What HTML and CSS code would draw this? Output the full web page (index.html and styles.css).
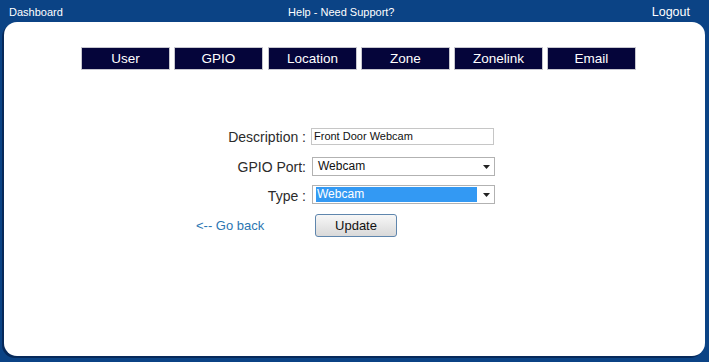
FILE: index.html
```html
<!DOCTYPE html>
<html>
<head>
<meta charset="utf-8">
<link rel="stylesheet" href="styles.css">
</head>
<body>
<header class="topbar">
  <a class="top-link" href="#">Dashboard</a>
  <a class="top-link help" href="#">Help - Need Support?</a>
  <a class="top-link logout" href="#">Logout</a>
</header>
<main class="panel">
  <nav class="tabs">
    <a class="tab" href="#">User</a>
    <a class="tab" href="#">GPIO</a>
    <a class="tab" href="#">Location</a>
    <a class="tab" href="#">Zone</a>
    <a class="tab" href="#">Zonelink</a>
    <a class="tab" href="#">Email</a>
  </nav>
  <form class="form">
    <label class="label">Description :</label>
    <div class="input">Front Door Webcam</div>
    <label class="label">GPIO Port:</label>
    <div class="select"><span class="select-value">Webcam</span><svg class="arrow" width="7" height="4" viewBox="0 0 7 4"><path d="M0 0h7L3.5 4z" fill="#222"/></svg></div>
    <label class="label">Type :</label>
    <div class="select focused"><span class="select-value">Webcam</span><svg class="arrow" width="7" height="4" viewBox="0 0 7 4"><path d="M0 0h7L3.5 4z" fill="#222"/></svg></div>
    <a class="back" href="#">&lt;-- Go back</a>
    <div><button class="update" type="button">Update</button></div>
  </form>
</main>
</body>
</html>
```
FILE: styles.css
```css
html, body {
  margin: 0;
  padding: 0;
}
body {
  background: #0b4385;
  font-family: "Liberation Sans", Arial, sans-serif;
  width: 709px;
  height: 362px;
  overflow: hidden;
}
.topbar {
  height: 22px;
  display: flex;
  justify-content: space-between;
  align-items: center;
  padding: 0 19px 0 9px;
}
.top-link {
  color: #fff;
  text-decoration: none;
  font-size: 11px;
  line-height: 22px;
  padding-top: 2px;
}
.top-link.help {
  margin-right: 32px;
}
.top-link.logout {
  font-size: 12.5px;
}
.panel {
  margin: 0 4px 0 4px;
  height: 334px;
  background: #fff;
  border-radius: 13px;
  box-shadow: -2px 2px 0 #06295a;
  padding-top: 25px;
  box-sizing: border-box;
}
.tabs {
  display: flex;
  gap: 4px;
  padding-left: 77px;
}
.tab {
  width: 89px;
  height: 23px;
  box-sizing: border-box;
  background: #05053a;
  border: 1px solid #c7c7cf;
  color: #fff;
  text-decoration: none;
  font-size: 13.5px;
  display: flex;
  align-items: center;
  justify-content: center;
}
.tab:nth-child(3) { margin-left: 1px; }
.form {
  display: grid;
  grid-template-columns: 120px 183px;
  column-gap: 5px;
  row-gap: 12px;
  align-items: center;
  margin: 58px 0 0 182px;
}
.label {
  text-align: right;
  font-size: 14px;
  color: #2b2b2b;
}
.input {
  height: 17px;
  box-sizing: border-box;
  border: 1px solid #c6c6c6;
  font-size: 11px;
  line-height: 15px;
  padding-left: 2px;
  color: #111;
}
.select {
  height: 19px;
  box-sizing: border-box;
  border: 1px solid #b2b2b2;
  display: flex;
  align-items: center;
  padding: 1px 4px 1px 3px;
  margin-left: 1px;
  margin-right: -1px;
  font-size: 12px;
  color: #111;
}
.select-value {
  flex: 1;
  padding-left: 2px;
  line-height: 15px;
}
.select.focused .select-value {
  background: #3399f3;
  color: #fff;
  margin-right: 6px;
  padding-left: 1px;
}
.select.focused {
  margin-top: -3px;
}
.arrow {
  flex: none;
}
.back {
  color: #2b76b2;
  text-decoration: none;
  font-size: 13px;
  padding-left: 10px;
  margin-top: -3px;
}
.update {
  margin: -5px 0 0 4px;
  width: 82px;
  height: 23px;
  border: 1px solid #5f86ad;
  border-radius: 3px;
  background: linear-gradient(#f7f7f7, #d9d9d9);
  font-family: "Liberation Sans", Arial, sans-serif;
  font-size: 13px;
  color: #111;
  padding: 0;
}
```
